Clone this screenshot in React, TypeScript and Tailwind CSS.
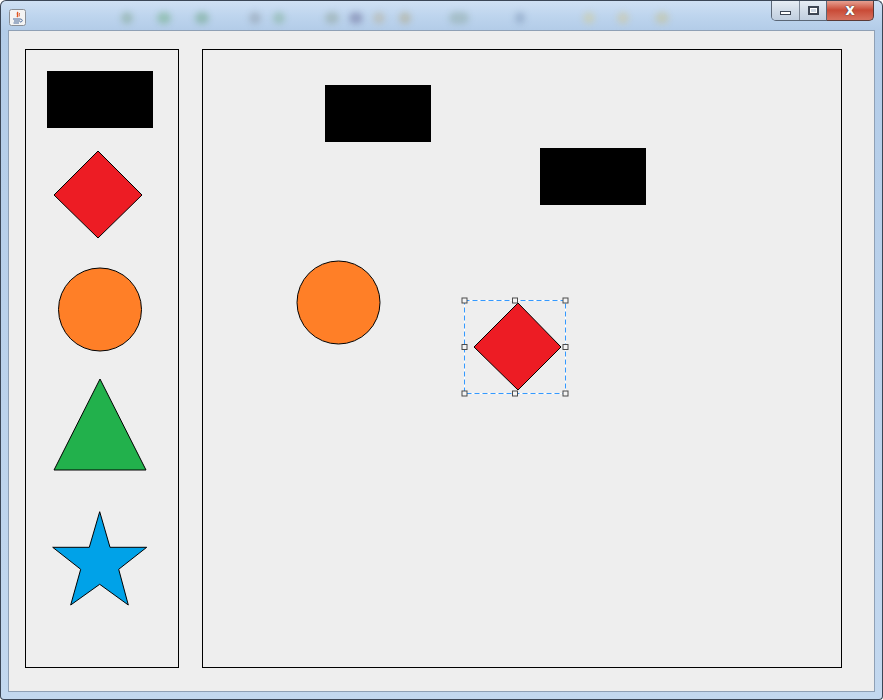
import React from "react";

function JavaIcon() {
  return (
    <svg width="17" height="17" viewBox="0 0 17 17">
      <rect x="0.5" y="0.5" width="16" height="16" rx="2" fill="#f4f4f4" stroke="#8a8f96" />
      <path d="M9 3 C7 5 10 6 8 8" stroke="#e0531f" strokeWidth="1.4" fill="none" />
      <path d="M10.5 4 C9.5 5.5 11 6 10 7.5" stroke="#e0531f" strokeWidth="1" fill="none" />
      <path d="M4 10 H11 M5 12 H11 M4.5 14 H10" stroke="#4a6a9a" strokeWidth="1" />
      <path d="M11 10 C14 10 14 13 11 13" stroke="#4a6a9a" strokeWidth="1" fill="none" />
    </svg>
  );
}

const blobs: { c: string; w: number; gap: number }[] = [
  { c: "#7fa58f", w: 12, gap: 0 },
  { c: "#6fae83", w: 14, gap: 24 },
  { c: "#6aa382", w: 14, gap: 24 },
  { c: "#8d9aa7", w: 12, gap: 40 },
  { c: "#7fb096", w: 12, gap: 12 },
  { c: "#8fa39a", w: 14, gap: 40 },
  { c: "#6d6f9a", w: 14, gap: 10 },
  { c: "#b8b19a", w: 12, gap: 10 },
  { c: "#b1a782", w: 12, gap: 14 },
  { c: "#8ea9a5", w: 20, gap: 38 },
  { c: "#7f97b8", w: 10, gap: 46 },
  { c: "#d1cc98", w: 12, gap: 58 },
  { c: "#d1c796", w: 12, gap: 22 },
  { c: "#c6c190", w: 14, gap: 26 },
];

function TitleBar() {
  return (
    <div className="relative h-[30px] w-full bg-gradient-to-b from-[#cfe0f3] via-[#bed5ee] to-[#b3cce8] border-t border-l border-r border-[#3b4656] rounded-tl-[6px] rounded-tr-[6px] overflow-hidden flex items-end pb-[5px] pl-[8px]">
      <div className="mb-[-1px] self-end">
        <JavaIcon />
      </div>
      <div className="flex items-center ml-[95px] mb-[1px] opacity-50">
        {blobs.map((b, i) => (
          <div
            key={i}
            className="h-[12px] rounded-full blur-[3px]"
            style={{ width: b.w, marginLeft: b.gap, background: b.c }}
          />
        ))}
      </div>
      <div className="absolute right-[8px] top-[-1px] flex">
        <div className="flex h-[21px] border border-t-0 border-[#5a6676] rounded-bl-[5px] overflow-hidden">
          <div className="w-[28px] h-full flex items-center justify-center bg-gradient-to-b from-[#e9eff6] via-[#d3dde9] to-[#c0cedf] border-r border-[#7d8897]">
            <div className="w-[11px] h-[4px] mt-[6px] bg-white border border-[#3d4654]" />
          </div>
          <div className="w-[26px] h-full flex items-center justify-center bg-gradient-to-b from-[#e9eff6] via-[#d3dde9] to-[#c0cedf]">
            <div className="w-[11px] h-[9px] border-[2px] border-[#3d4654] bg-white">
              <div className="w-full h-full border border-white bg-[#cdd7e3]" />
            </div>
          </div>
        </div>
        <div className="w-[47px] h-[21px] flex items-center justify-center bg-gradient-to-b from-[#e8a89b] via-[#c94a36] to-[#d6715f] border border-t-0 border-l-0 border-[#5a3a36] rounded-br-[5px]">
          <span
            className="text-white text-[15px] font-bold leading-none"
            style={{ fontFamily: '"DejaVu Sans", sans-serif', textShadow: "0 0 1px #333, 0 0 1px #333" }}
          >
            x
          </span>
        </div>
      </div>
    </div>
  );
}

const RED = "#ed1c24";
const ORANGE = "#ff7f27";
const GREEN = "#22b14c";
const BLUE = "#00a2e8";

function Palette() {
  return (
    <div className="w-[154px] h-[619px] border border-black flex flex-col">
      <svg width="152" height="90" viewBox="0 0 152 90">
        <rect x="21" y="21" width="106" height="57" fill="#000" />
      </svg>
      <svg width="152" height="110" viewBox="0 90 152 110">
        <polygon points="72,101 116,145 72,188 28,145" fill={RED} stroke="#000" strokeWidth="1" />
      </svg>
      <svg width="152" height="110" viewBox="0 200 152 110">
        <circle cx="74" cy="259.5" r="41.5" fill={ORANGE} stroke="#000" strokeWidth="1" />
      </svg>
      <svg width="152" height="140" viewBox="0 310 152 140">
        <polygon points="74,329 120,420 28,420" fill={GREEN} stroke="#000" strokeWidth="1" />
      </svg>
      <svg width="152" height="167" viewBox="0 450 152 167">
        <polygon
          points="73.7,461.7 84,497.3 120.7,497.3 92.7,519.3 102.3,555 73.7,534.3 44.7,555 54.7,519.3 26.7,497.3 63.3,497.3"
          fill={BLUE}
          stroke="#000"
          strokeWidth="1"
        />
      </svg>
    </div>
  );
}

function Handle({ x, y }: { x: number; y: number }) {
  return <rect x={x - 2.5} y={y - 2.5} width="5" height="5" fill="#f4f4f4" stroke="#4a4a4a" strokeWidth="1" />;
}

function Canvas() {
  const sx1 = 261.5, sy1 = 250.5, sx2 = 362.5, sy2 = 343.5;
  const mx = (sx1 + sx2) / 2, my = (sy1 + sy2) / 2;
  return (
    <div className="w-[640px] h-[619px] border border-black">
      <svg className="block" width="638" height="617" viewBox="0 0 638 617">
        <rect x="122" y="35" width="106" height="57" fill="#000" />
        <rect x="337" y="98" width="106" height="57" fill="#000" />
        <circle cx="135.5" cy="252.5" r="41.5" fill={ORANGE} stroke="#000" strokeWidth="1" />
        <polygon points="315,253 358,297 315,340 271,297" fill={RED} stroke="#000" strokeWidth="1" />
        <rect x={sx1} y={sy1} width={sx2 - sx1} height={sy2 - sy1} fill="none" stroke="#ffffff" strokeWidth="1" />
        <rect
          x={sx1}
          y={sy1}
          width={sx2 - sx1}
          height={sy2 - sy1}
          fill="none"
          stroke="#3399ff"
          strokeWidth="1"
          strokeDasharray="5 3"
        />
        <Handle x={sx1} y={sy1} />
        <Handle x={mx} y={sy1} />
        <Handle x={sx2} y={sy1} />
        <Handle x={sx1} y={my} />
        <Handle x={sx2} y={my} />
        <Handle x={sx1} y={sy2} />
        <Handle x={mx} y={sy2} />
        <Handle x={sx2} y={sy2} />
      </svg>
    </div>
  );
}

export default function App() {
  return (
    <div className="w-[883px] h-[700px] bg-white overflow-hidden">
      <div className="w-full h-full flex flex-col">
        <TitleBar />
        <div className="flex-1 flex bg-gradient-to-b from-[#b3cce8] to-[#c3d8ef] border-l border-r border-b border-[#3b4656] rounded-b-[4px] px-[7px] pb-[7px]">
          <div className="flex-1 flex border border-[#8fa0b5] bg-[#eeeeee] pl-[16px] pt-[18px] gap-[23px]">
            <Palette />
            <Canvas />
          </div>
        </div>
      </div>
    </div>
  );
}
